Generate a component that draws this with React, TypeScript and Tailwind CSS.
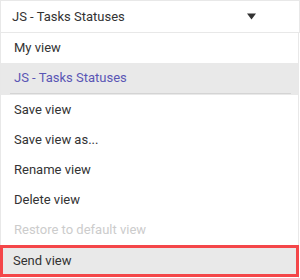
import React from "react";

export default function App() {
  const item = "h-[30px] flex items-center px-[13px] text-[13px]";
  return (
    <div className="w-[300px] h-[278px] bg-white flex flex-col" style={{ fontFamily: "Roboto, 'Liberation Sans', sans-serif" }}>
      <div className="h-[33px] shrink-0 border border-[#e8e8e8] flex items-center justify-between pl-[11px] pr-[43px] text-[13px] text-[#333]">
        <span>JS - Tasks Statuses</span>
        <svg width="9" height="7" viewBox="0 0 9 7"><path d="M0 0.5 H9 L4.5 6.5 Z" fill="#333" /></svg>
      </div>
      <div className="flex-1 flex flex-col border-l border-r border-[#e8e8e8] mr-[1px] text-[#333]">
        <div className={item}>My view</div>
        <div className={`${item} bg-[#e9e9e9] text-[#5a56b5]`}>JS - Tasks Statuses</div>
        <div className="h-[2px] bg-[#e9e9e9] flex">
          <div className="ml-[9px] mr-[7px] flex-1 h-[1px] bg-[#d4d4d4]" />
        </div>
        <div className={item}>Save view</div>
        <div className={item}>Save view as...</div>
        <div className={item}>Rename view</div>
        <div className={item}>Delete view</div>
        <div className={`${item} text-[#cccccc]`}>Restore to default view</div>
        <div className="h-[32px] flex items-center px-[10px] text-[13px] bg-[#e9e9e9] border-[3px] border-[#f44649] -ml-[1px] -mr-[1px]">Send view</div>
      </div>
    </div>
  );
}
